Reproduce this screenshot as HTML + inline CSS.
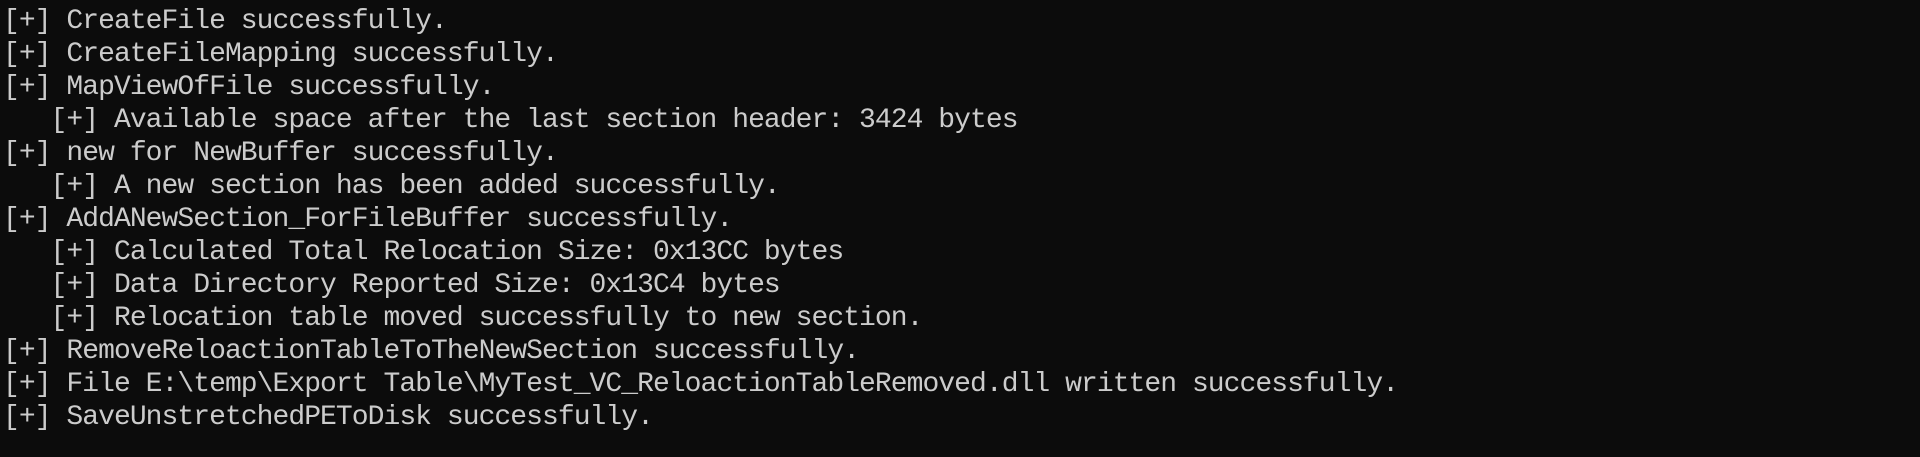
<!DOCTYPE html>
<html><head><meta charset="utf-8"><style>
html,body{margin:0;padding:0;background:#0c0c0c;width:1920px;height:457px;overflow:hidden}
pre{margin:0;padding:5px 0 0 3px;font-family:"Liberation Mono",monospace;font-size:28px;letter-spacing:-0.95px;line-height:33px;color:#cccccc}
</style></head><body><pre>[+] CreateFile successfully.
[+] CreateFileMapping successfully.
[+] MapViewOfFile successfully.
   [+] Available space after the last section header: 3424 bytes
[+] new for NewBuffer successfully.
   [+] A new section has been added successfully.
[+] AddANewSection_ForFileBuffer successfully.
   [+] Calculated Total Relocation Size: 0x13CC bytes
   [+] Data Directory Reported Size: 0x13C4 bytes
   [+] Relocation table moved successfully to new section.
[+] RemoveReloactionTableToTheNewSection successfully.
[+] File E:\temp\Export Table\MyTest_VC_ReloactionTableRemoved.dll written successfully.
[+] SaveUnstretchedPEToDisk successfully.</pre></body></html>
